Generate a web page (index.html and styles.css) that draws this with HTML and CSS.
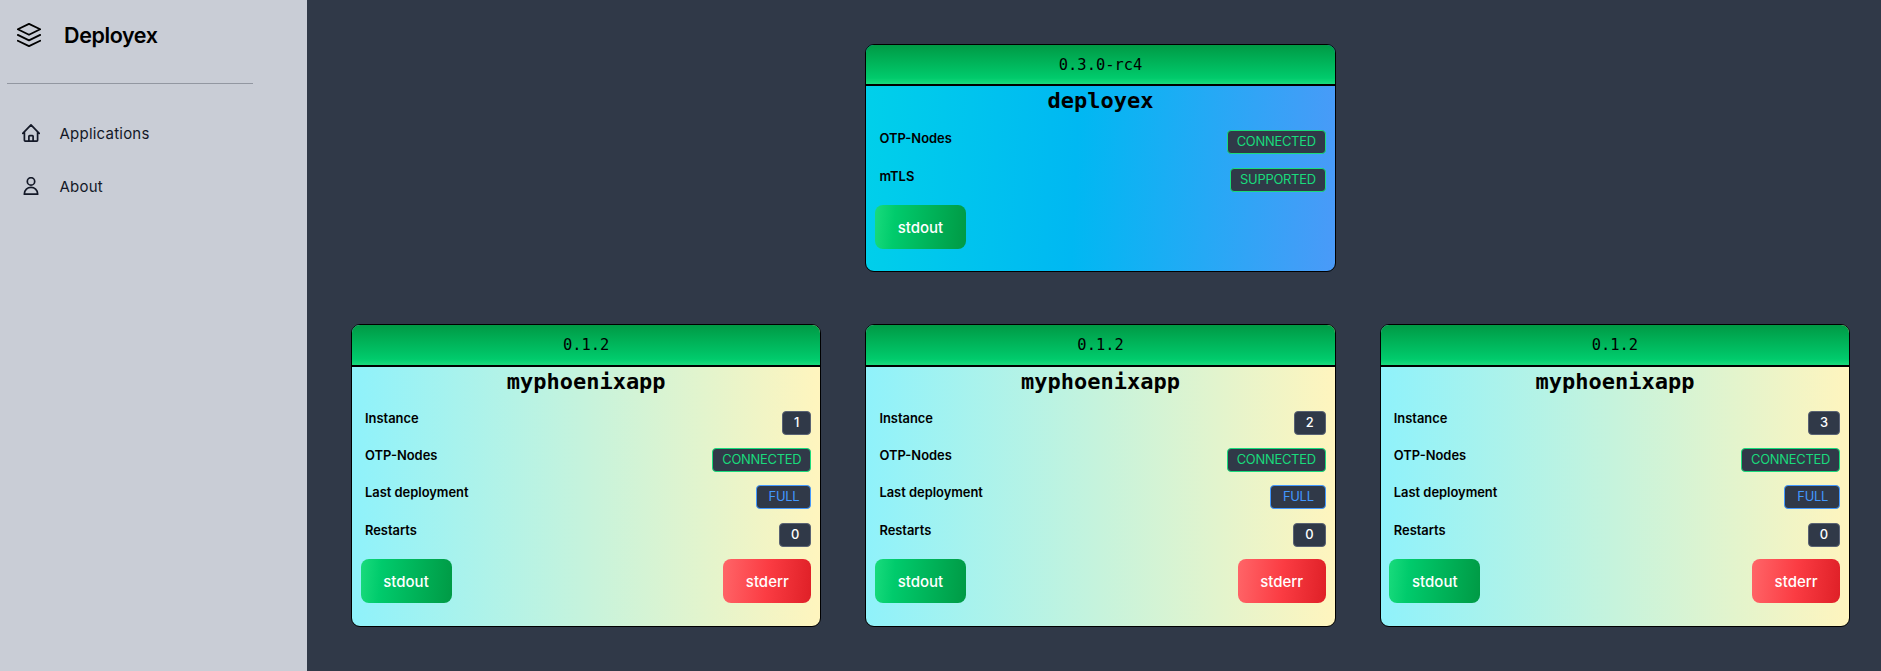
FILE: index.html
```html
<!DOCTYPE html>
<html lang="en">
<head>
<meta charset="utf-8">
<title>Deployex</title>
<link rel="stylesheet" href="styles.css">
</head>
<body>
<aside class="sidebar">
  <div class="brand">
    <svg class="logo" viewBox="0 0 24 24"><path d="M12 .9 23.2 6.3 12 11.8.8 6.3ZM.8 11.9 12 17.4l11.2-5.5M.8 17.7 12 23.1l11.2-5.4"/></svg>
    <span>Deployex</span>
  </div>
  <hr class="rule">
  <nav class="nav">
    <a class="nav-item">
      <svg class="icon" viewBox="0 0 18 18"><path d="M.8 9.3 9 .9l8.2 8.4M2.4 8v8.2q0 .9.9.9h11.4q.9 0 .9-.9V8M6.9 17v-4.7q0-.7.7-.7h2.8q.7 0 .7.7V17"/></svg>
      <span>Applications</span>
    </a>
    <a class="nav-item">
      <svg class="icon" viewBox="0 0 18 18"><circle cx="9" cy="4.4" r="3.7"/><path d="M2.3 17.2C2.3 8.2 15.7 8.2 15.7 17.2Z"/></svg>
      <span>About</span>
    </a>
  </nav>
</aside>
<main class="board">
  <section class="card host">
    <header class="version">0.3.0-rc4</header>
    <h2 class="name">deployex</h2>
    <div class="rows">
      <div class="row"><span class="label">OTP-Nodes</span><span class="badge ok">CONNECTED</span></div>
      <div class="row"><span class="label">mTLS</span><span class="badge ok">SUPPORTED</span></div>
    </div>
    <div class="actions"><button class="btn out">stdout</button></div>
  </section>
  <section class="card app first">
    <header class="version">0.1.2</header>
    <h2 class="name">myphoenixapp</h2>
    <div class="rows">
      <div class="row"><span class="label">Instance</span><span class="badge">1</span></div>
      <div class="row"><span class="label">OTP-Nodes</span><span class="badge ok">CONNECTED</span></div>
      <div class="row"><span class="label">Last deployment</span><span class="badge info">FULL</span></div>
      <div class="row"><span class="label">Restarts</span><span class="badge">0</span></div>
    </div>
    <div class="actions"><button class="btn out">stdout</button><button class="btn err">stderr</button></div>
  </section>
  <section class="card app">
    <header class="version">0.1.2</header>
    <h2 class="name">myphoenixapp</h2>
    <div class="rows">
      <div class="row"><span class="label">Instance</span><span class="badge">2</span></div>
      <div class="row"><span class="label">OTP-Nodes</span><span class="badge ok">CONNECTED</span></div>
      <div class="row"><span class="label">Last deployment</span><span class="badge info">FULL</span></div>
      <div class="row"><span class="label">Restarts</span><span class="badge">0</span></div>
    </div>
    <div class="actions"><button class="btn out">stdout</button><button class="btn err">stderr</button></div>
  </section>
  <section class="card app">
    <header class="version">0.1.2</header>
    <h2 class="name">myphoenixapp</h2>
    <div class="rows">
      <div class="row"><span class="label">Instance</span><span class="badge">3</span></div>
      <div class="row"><span class="label">OTP-Nodes</span><span class="badge ok">CONNECTED</span></div>
      <div class="row"><span class="label">Last deployment</span><span class="badge info">FULL</span></div>
      <div class="row"><span class="label">Restarts</span><span class="badge">0</span></div>
    </div>
    <div class="actions"><button class="btn out">stdout</button><button class="btn err">stderr</button></div>
  </section>
</main>
</body>
</html>
```
FILE: styles.css
```css
* { box-sizing: border-box; }
body {
  margin: 0;
  height: 671px;
  display: flex;
  overflow: hidden;
  background: #303948;
  font-family: Inter, sans-serif;
  color: #000;
}
.sidebar {
  width: 307px;
  flex: none;
  background: #c9cdd6;
}
.brand {
  display: flex;
  align-items: center;
  gap: 23px;
  height: 70px;
  padding-left: 17px;
  font-size: 21.5px;
  font-weight: 600;
  letter-spacing: -0.4px;
}
svg {
  fill: none;
  stroke: currentColor;
  stroke-linecap: round;
  stroke-linejoin: round;
}
.logo { width: 24px; height: 24px; stroke-width: 1.8; }
.rule {
  width: 246px;
  height: 1px;
  margin: 13px 0 0 7px;
  border: 0;
  background: #9297a1;
}
.nav { padding: 22.5px 0 0 22px; }
.nav-item {
  display: flex;
  align-items: center;
  gap: 19.5px;
  height: 53px;
  color: #131827;
  font-size: 15px;
  letter-spacing: 0.22px;
}
.icon { width: 18px; height: 18px; stroke-width: 1.7; }

.board {
  flex: 1;
  display: grid;
  grid-template-columns: repeat(3, 470.3px);
  grid-template-rows: 228px 303px;
  gap: 52px 44.1px;
  padding: 44px 0 0 44px;
}
.card {
  display: flex;
  flex-direction: column;
  border: 1px solid #000;
  border-radius: 9px;
  overflow: hidden;
}
.host { grid-column: 2; background: linear-gradient(93deg, #00d0ea, #00b8f2 45%, #4a9af8); }
.first { grid-column: 1; }
.app { background: linear-gradient(90deg, #8ff2fb, #c6f3dc 50%, #fff5be); }
.version {
  flex: none;
  height: 42px;
  line-height: 40px;
  border-bottom: 2px solid #000;
  background: linear-gradient(#009a45, #00cb6c 85%, #19db7c);
  text-align: center;
  font-family: "DejaVu Sans Mono", monospace;
  font-size: 15.4px;
}
.host .version { height: 41px; }
.name {
  margin: 0;
  text-align: center;
  font: bold 22px/29px "DejaVu Sans Mono", monospace;
}
.rows { padding: 14px 9px 0.4px 13px; }
.host .rows { padding-bottom: 0; }
.row {
  display: flex;
  justify-content: space-between;
  align-items: flex-start;
  height: 37.2px;
}
.host .row { height: 38px; }
.label { font-size: 12.9px; font-weight: 600; line-height: 18px; }
.host .label { line-height: 19px; }
.badge {
  height: 24px;
  margin-top: 1px;
  padding: 0 11px;
  border: 1px solid #596273;
  border-radius: 4px;
  background: #303948;
  color: #fff;
  font-size: 12.9px;
  font-weight: 500;
  line-height: 21px;
}
.ok, .info { font-weight: 400; letter-spacing: -0.25px; }
.ok { padding: 0 9px; border-color: #19db7c; color: #19db7c; }
.info { padding: 0 11px 0 12px; border-color: #4298ff; color: #4298ff; }
.actions { display: flex; justify-content: space-between; padding: 0 9px 0 8.5px; }
.btn {
  width: 91px;
  height: 44px;
  padding: 0;
  border: 0;
  border-radius: 8px;
  color: #fff;
  font: 500 15px Inter, sans-serif;
}
.out { background: linear-gradient(95deg, #19db7c, #00cb6c 22%, #009a45); }
.err { width: 88px; background: linear-gradient(95deg, #ff6568, #fb3c43 50%, #df2027); }
```
